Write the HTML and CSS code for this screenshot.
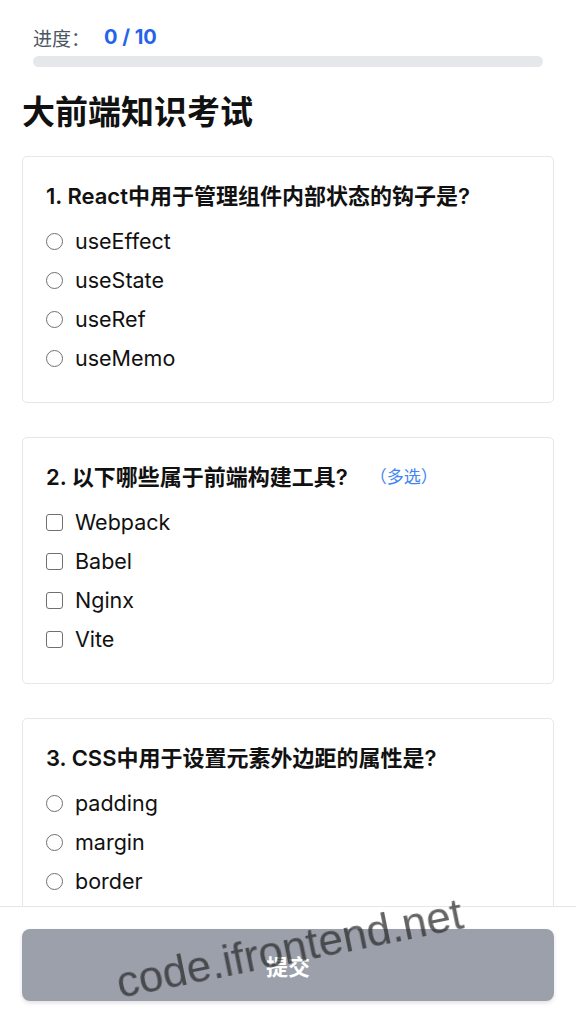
FILE: index.html
```html
<!DOCTYPE html>
<html lang="zh-CN">
  <head>
    <title>大前端知识考试</title>
    <meta charset="UTF-8">
    <link rel="stylesheet" href="styles.css">
  </head>
  <body>
    <header class="progress">
      <div class="progress-text">
        <span class="progress-label">进度：</span>
        <span class="progress-count">0 / 10</span>
      </div>
      <div class="progress-track">
        <div class="progress-fill" style="width: 0%"></div>
      </div>
    </header>

    <main class="quiz">
      <h1 class="quiz-title">大前端知识考试</h1>

      <section class="question">
        <h2 class="question-title">1. React中用于管理组件内部状态的钩子是?</h2>
        <label class="option"><input type="radio" name="q1"> useEffect</label>
        <label class="option"><input type="radio" name="q1"> useState</label>
        <label class="option"><input type="radio" name="q1"> useRef</label>
        <label class="option"><input type="radio" name="q1"> useMemo</label>
      </section>

      <section class="question">
        <h2 class="question-title">2. 以下哪些属于前端构建工具?<span class="question-tag">（多选）</span></h2>
        <label class="option"><input type="checkbox" name="q2"> Webpack</label>
        <label class="option"><input type="checkbox" name="q2"> Babel</label>
        <label class="option"><input type="checkbox" name="q2"> Nginx</label>
        <label class="option"><input type="checkbox" name="q2"> Vite</label>
      </section>

      <section class="question">
        <h2 class="question-title">3. CSS中用于设置元素外边距的属性是?</h2>
        <label class="option"><input type="radio" name="q3"> padding</label>
        <label class="option"><input type="radio" name="q3"> margin</label>
        <label class="option"><input type="radio" name="q3"> border</label>
        <label class="option"><input type="radio" name="q3"> outline</label>
      </section>
    </main>

    <footer class="submit-bar">
      <button class="submit-btn" type="button" disabled>提交</button>
    </footer>

    <div class="watermark">code.ifrontend.net</div>
  </body>
</html>
```

FILE: styles.css
```css
/* base */
html,
body {
  margin: 0;
  padding: 0;
}
body {
  background: #fff;
  color: #111;
  font-family: Inter, "Noto Sans CJK SC", sans-serif;
  overflow: hidden;
}

/* progress header */
.progress {
  padding: 23px 33px 0 33px;
}
.progress-text {
  align-items: center;
  display: flex;
  font-size: 19px;
  height: 28px;
}
.progress-label {
  color: hsl(215, 14%, 34%);
}
.progress-count {
  color: hsl(221, 83%, 53%);
  font-size: 20px;
  font-weight: 700;
  margin-left: 14px;
}
.progress-track {
  background: hsl(220, 13%, 91%);
  border-radius: 6px;
  height: 11px;
  margin-top: 5px;
  overflow: hidden;
}
.progress-fill {
  background: hsl(221, 83%, 53%);
  height: 100%;
}

/* quiz */
.quiz {
  padding: 0 22px 140px 22px;
}
.quiz-title {
  font-size: 33px;
  font-weight: 700;
  line-height: 46px;
  margin: 22px 0 21px 0;
}
.question {
  border: 1px solid hsl(220, 13%, 91%);
  border-radius: 5px;
  display: flex;
  flex-direction: column;
  gap: 9px;
  margin-bottom: 34px;
  padding: 24px 23px 29px 23px;
}
.question-title {
  align-items: center;
  display: flex;
  font-size: 22px;
  font-weight: 600;
  line-height: 30px;
  margin: 0 0 6px 0;
}
.question-tag {
  color: hsl(217, 85%, 60%);
  font-size: 17px;
  font-weight: 400;
  margin-left: 22px;
}
.option {
  align-items: center;
  display: flex;
  font-size: 21.5px;
  gap: 12px;
  height: 30px;
}
.option input {
  -webkit-appearance: none;
  appearance: none;
  border: 1px solid hsl(0, 0%, 44%);
  flex: none;
  height: 17px;
  margin: 0;
  width: 17px;
}
.option input[type="radio"] {
  border-radius: 50%;
}
.option input[type="checkbox"] {
  border-radius: 3px;
}

/* fixed submit bar */
.submit-bar {
  background: #fff;
  border-top: 1px solid hsl(220, 13%, 91%);
  bottom: 0;
  left: 0;
  padding: 22px 22px 23px 22px;
  position: fixed;
  right: 0;
}
.submit-btn {
  background: hsl(220, 9%, 64%);
  border: 0;
  border-radius: 8px;
  box-shadow: 0 2px 4px rgba(0, 0, 0, 0.12);
  color: #fff;
  display: block;
  font-family: inherit;
  font-size: 22px;
  font-weight: 700;
  height: 72px;
  width: 100%;
}

/* watermark */
.watermark {
  color: rgba(40, 40, 40, 0.72);
  font-family: "Liberation Sans", sans-serif;
  font-size: 44px;
  left: 122px;
  pointer-events: none;
  position: fixed;
  top: 958px;
  transform: rotate(-11.5deg);
  transform-origin: left bottom;
  white-space: nowrap;
}
```
